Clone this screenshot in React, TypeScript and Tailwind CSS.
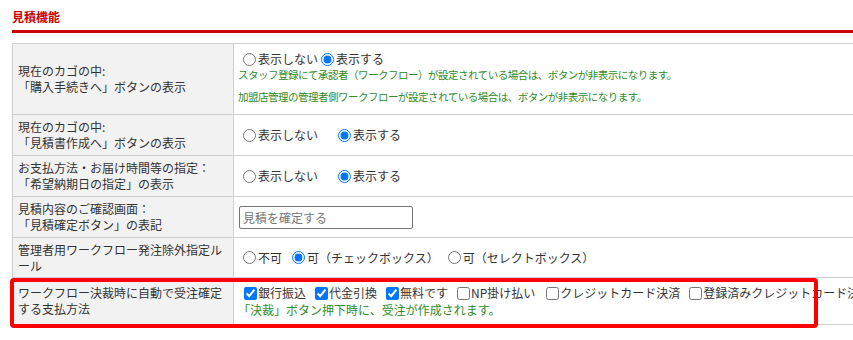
import React from "react";

const font = "font-['Noto_Sans_CJK_JP','Noto_Sans',sans-serif]";

function Radio({ label, checked, className = "" }: { label: string; checked?: boolean; className?: string }) {
  return (
    <label className={`inline-flex items-center h-[16px] shrink-0 ${className}`}>
      <input type="radio" defaultChecked={checked} className="ml-[5px] mr-[2px] w-[13px] h-[13px]" />
      <span>{label}</span>
    </label>
  );
}

function Check({ label, checked, className = "" }: { label: string; checked?: boolean; className?: string }) {
  return (
    <label className={`inline-flex items-center h-[20px] shrink-0 ${className}`}>
      <input type="checkbox" defaultChecked={checked} className="ml-[6px] mr-[1px] w-[13px] h-[13px]" />
      <span>{label}</span>
    </label>
  );
}

function Row({ h, label, children, right = "justify-center" }: { h: string; label: React.ReactNode; children: React.ReactNode; right?: string }) {
  return (
    <div className={`flex border-b border-[#cfcfcf] ${h}`}>
      <div className="w-[221px] shrink-0 bg-[#f2f2f2] border-r border-[#cfcfcf] pl-[5px] pr-[4px] flex flex-col justify-center leading-[16px]">
        {label}
      </div>
      <div className={`flex-1 pl-[4px] flex flex-col ${right}`}>{children}</div>
    </div>
  );
}

export default function App() {
  return (
    <div className={`relative w-[853px] h-[340px] overflow-hidden bg-white text-[12px] text-[#333] ${font}`}>
      <div className="pl-[12px]">
        <h2 className="pt-[9px] h-[25px] text-[12px] leading-[16px] font-bold text-[#cc0000]">見積機能</h2>
        <div className="mt-[5px] h-[3px] bg-[#cc0000] w-[900px]" />
        <div className="mt-[10px] w-[1000px] border-t border-l border-[#cfcfcf]">
          <Row
            h="h-[71px]"
            right="justify-start pt-[7px]"
            label={
              <>
                <div>現在のカゴの中:</div>
                <div>「購入手続きへ」ボタンの表示</div>
              </>
            }
          >
            <div className="leading-[16px]">
              <div className="flex items-center">
                <Radio label="表示しない" />
                <Radio label="表示する" checked className="-ml-[2px]" />
              </div>
              <div className="text-[10.5px] tracking-[-0.5px] text-[#2e8b2e]">スタッフ登録にて承認者（ワークフロー）が設定されている場合は、ボタンが非表示になります。</div>
              <div className="mt-[6px] text-[10.5px] tracking-[-0.5px] text-[#2e8b2e]">加盟店管理の管理者側ワークフローが設定されている場合は、ボタンが非表示になります。</div>
            </div>
          </Row>
          <Row
            h="h-[41px]"
            label={
              <>
                <div>現在のカゴの中:</div>
                <div>「見積書作成へ」ボタンの表示</div>
              </>
            }
          >
            <div className="flex items-center leading-[16px]">
              <Radio label="表示しない" />
              <Radio label="表示する" checked className="ml-[15px]" />
            </div>
          </Row>
          <Row
            h="h-[41px]"
            label={
              <>
                <div>お支払方法・お届け時間等の指定：</div>
                <div>「希望納期日の指定」の表示</div>
              </>
            }
          >
            <div className="flex items-center leading-[16px]">
              <Radio label="表示しない" />
              <Radio label="表示する" checked className="ml-[15px]" />
            </div>
          </Row>
          <Row
            h="h-[41px]"
            label={
              <>
                <div>見積内容のご確認画面：</div>
                <div>「見積確定ボタン」の表記</div>
              </>
            }
          >
            <div className="flex">
              <input
                type="text"
                placeholder="見積を確定する"
                className="ml-[1px] w-[174px] h-[23px] border border-[#767676] rounded-[2px] px-[3px] text-[12px] placeholder:text-[#757575] text-[#333]"
              />
            </div>
          </Row>
          <Row
            h="h-[40px]"
            label={
              <>
                <div>管理者用ワークフロー発注除外指定ル</div>
                <div>ール</div>
              </>
            }
          >
            <div className="flex items-center leading-[16px]">
              <Radio label="不可" />
              <Radio label="可（チェックボックス）" checked className="ml-[5px]" />
              <Radio label="可（セレクトボックス）" className="ml-[4px]" />
            </div>
          </Row>
          <Row
            h="h-[47px]"
            right="justify-start pt-[5px]"
            label={
              <>
                <div>ワークフロー決裁時に自動で受注確定</div>
                <div>する支払方法</div>
              </>
            }
          >
            <div className="leading-[16px]">
              <div className="flex items-center whitespace-nowrap">
                <Check label="銀行振込" checked />
                <Check label="代金引換" checked className="ml-[3px]" />
                <Check label="無料です" checked className="ml-[3px]" />
                <Check label="NP掛け払い" className="ml-[3px]" />
                <Check label="クレジットカード決済" className="ml-[5px]" />
                <Check label="登録済みクレジットカード決済" className="ml-[3px]" />
              </div>
              <div className="text-[#2e8b2e] -mt-[1px]">「決裁」ボタン押下時に、受注が作成されます。</div>
            </div>
          </Row>
        </div>
      </div>
      <div className="absolute left-[10px] top-[278px] w-[808px] h-[50px] border-[4px] border-[#ff0000] rounded-[4px]" />
    </div>
  );
}
